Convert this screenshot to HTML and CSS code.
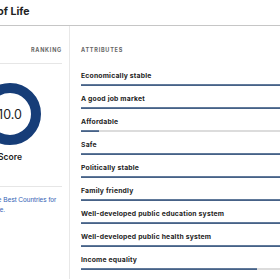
FILE: index.html
```
<!DOCTYPE html>
<html>
  <head>
    <link rel="stylesheet" href="styles.css">
  </head>
  <body>
    <div class="page">
      <h1 class="title">Quality of Life</h1>
      <div class="panel">
        <aside class="ranking">
          <div class="col-head">Ranking</div>
          <div class="score">
            <div class="ring">
              <svg viewBox="0 0 62 62" width="62" height="62">
                <circle cx="31" cy="31" r="26" fill="none" stroke="#163d78" stroke-width="10" />
              </svg>
              <span class="ring-value">10.0</span>
            </div>
            <div class="score-label">Score</div>
          </div>
          <a class="more" href="#">See all of the Best Countries for Quality of Life.</a>
        </aside>
        <section class="attributes">
          <div class="col-head">Attributes</div>
          <ul class="attr-list">
            <li class="attr">
              <span class="attr-name">Economically stable</span>
              <div class="bar"><div class="fill" style="width: 100%"></div></div>
            </li>
            <li class="attr">
              <span class="attr-name">A good job market</span>
              <div class="bar"><div class="fill" style="width: 100%"></div></div>
            </li>
            <li class="attr">
              <span class="attr-name">Affordable</span>
              <div class="bar"><div class="fill" style="width: 7.2%"></div></div>
            </li>
            <li class="attr">
              <span class="attr-name">Safe</span>
              <div class="bar"><div class="fill" style="width: 100%"></div></div>
            </li>
            <li class="attr">
              <span class="attr-name">Politically stable</span>
              <div class="bar"><div class="fill" style="width: 100%"></div></div>
            </li>
            <li class="attr">
              <span class="attr-name">Family friendly</span>
              <div class="bar"><div class="fill" style="width: 100%"></div></div>
            </li>
            <li class="attr">
              <span class="attr-name">Well-developed public education system</span>
              <div class="bar"><div class="fill" style="width: 100%"></div></div>
            </li>
            <li class="attr">
              <span class="attr-name">Well-developed public health system</span>
              <div class="bar"><div class="fill" style="width: 100%"></div></div>
            </li>
            <li class="attr">
              <span class="attr-name">Income equality</span>
              <div class="bar"><div class="fill" style="width: 70.4%"></div></div>
            </li>
          </ul>
        </section>
      </div>
    </div>
  </body>
</html>
```

FILE: styles.css
```
html {
  margin: 0;
  padding: 0;
}
body {
  margin: 0;
  padding: 0;
  background: #fff;
  color: #222;
  font-family: Inter, "Open Sans", sans-serif;
  overflow: hidden;
}

.page {
  width: 400px;
  margin-left: -42px;
}
.title {
  margin: 0;
  padding: 5px 0 7px;
  font-size: 10.5px;
  line-height: 13px;
  font-weight: 700;
  border-bottom: 1px solid #c6c6c6;
}

.panel {
  display: flex;
}
.ranking {
  width: 104px;
  flex-shrink: 0;
  padding-right: 7px;
  border-right: 1px solid #e8e8e8;
}
.attributes {
  flex: 1;
  padding-left: 11px;
}

.col-head {
  padding-top: 20px;
  font-size: 5.5px;
  line-height: 8px;
  font-weight: 700;
  letter-spacing: 0.14em;
  text-transform: uppercase;
  color: #666;
}
.ranking .col-head {
  text-align: right;
  padding-bottom: 9px;
  border-bottom: 1px solid #e6e6e6;
}

.score {
  display: flex;
  flex-direction: column;
  align-items: center;
  padding: 19px 0 24px;
  border-bottom: 1px solid #e6e6e6;
}
.ring {
  position: relative;
  width: 62px;
  height: 62px;
}
.ring svg {
  display: block;
}
.ring-value {
  position: absolute;
  inset: 0;
  display: flex;
  align-items: center;
  justify-content: center;
  font-size: 12.5px;
  color: #222;
}
.score-label {
  margin-top: 7px;
  font-size: 8.5px;
  line-height: 10px;
  font-weight: 600;
}

.more {
  display: block;
  margin-top: 8px;
  padding-left: 5px;
  font-family: "Liberation Sans", Arial, sans-serif;
  font-size: 6.6px;
  line-height: 10px;
  color: #3563b5;
  text-decoration: none;
}

.attr-list {
  list-style: none;
  margin: 18px 0 0;
  padding: 0;
  width: 250px;
}
.attr {
  padding-bottom: 9px;
}
.attr-name {
  display: block;
  font-size: 6.8px;
  line-height: 8px;
  font-weight: 700;
  letter-spacing: 0.03em;
  color: #222;
}
.bar {
  margin-top: 4px;
  height: 2px;
  background: #dcdcdc;
}
.fill {
  height: 100%;
  background: linear-gradient(#6d85a4, #3a567d);
}
```
